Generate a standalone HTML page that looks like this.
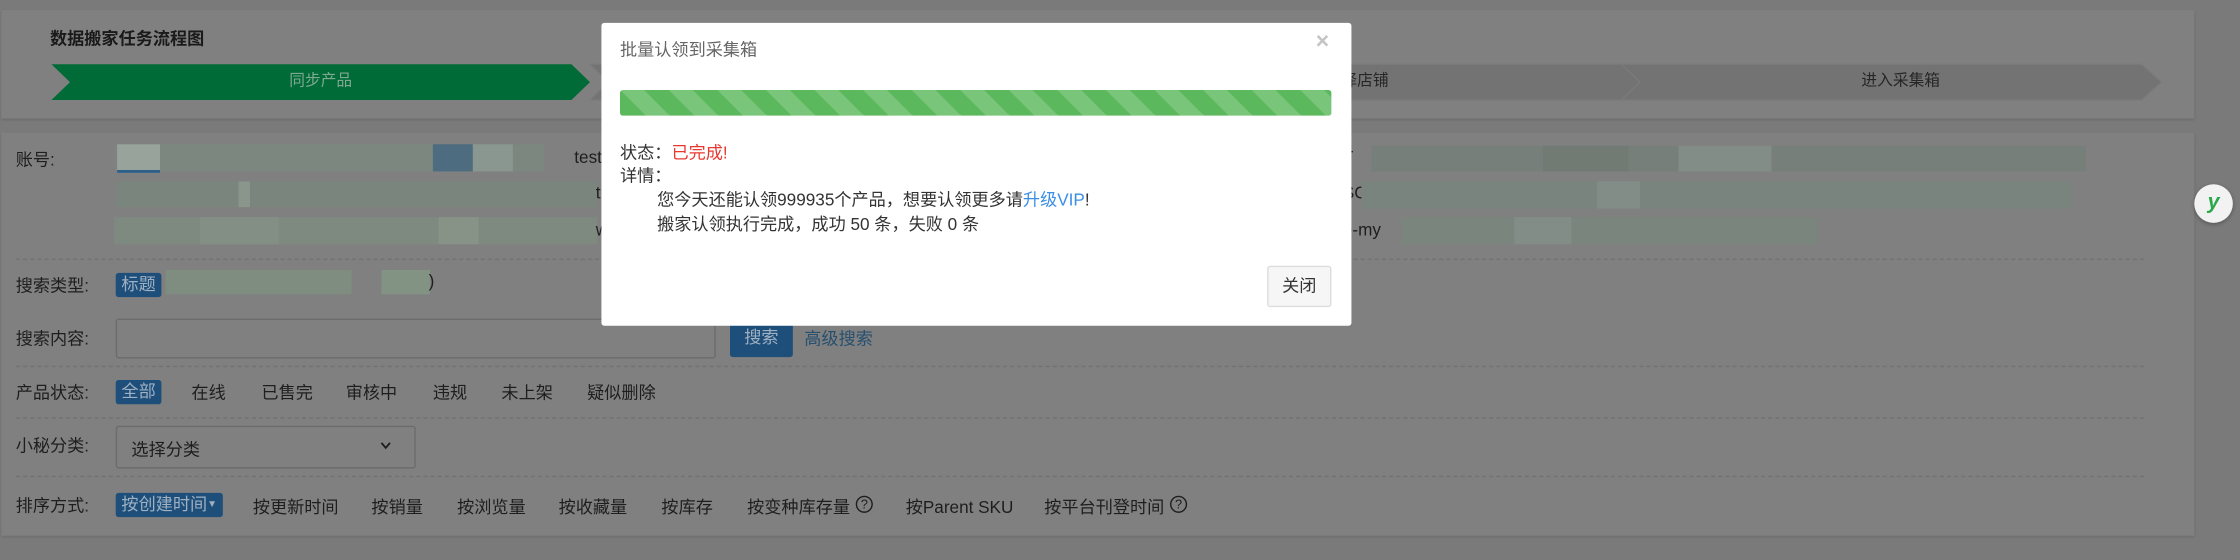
<!DOCTYPE html>
<html><head><meta charset="utf-8"><style>
html,body{margin:0;padding:0;width:2240px;height:560px;overflow:hidden;background:#7a7a7a}
#w{position:absolute;left:0;top:0;width:1568px;height:392px;transform:scale(1.428571);transform-origin:0 0;font-family:"Liberation Sans","Noto Sans CJK SC",sans-serif;font-size:12px;color:#1e1e1e}
.a{position:absolute;white-space:nowrap}
.panel{position:absolute;background:#808080;box-shadow:0 1px 2px rgba(0,0,0,.12)}
.dash{position:absolute;left:11px;width:1490px;border-top:1px dashed #727272;height:0}
.badge{position:absolute;background:#1e4f7a;color:#9fb0c2;height:17px;line-height:17px;padding:0 4px;border-radius:2px;white-space:nowrap}
.blk{position:absolute;background:#7d8880}
.step{position:absolute;top:45px;height:25px;line-height:25px;text-align:center;color:#262626}
</style></head><body><div id="w">
<div class="panel" style="left:1px;top:7px;width:1535px;height:76px"></div>
<div class="a" style="left:35px;top:18px;font-weight:bold;font-size:12px;color:#1a1a1a">数据搬家任务流程图</div>
<svg class="a" style="left:0;top:0" width="1568" height="100">
<polygon points="413,45 783,45 796,57.5 783,70 413,70 426,57.5" fill="#737373" stroke="#7a7a7a"/>
<polygon points="783,45 1135,45 1148,57.5 1135,70 783,70 796,57.5" fill="#737373" stroke="#7a7a7a"/>
<polygon points="1135,45 1499,45 1513,57.5 1499,70 1135,70 1148,57.5" fill="#737373" stroke="#7a7a7a"/>
<polygon points="36,45 400,45 413,57.5 400,70 36,70 49,57.5" fill="#006b36"/>
</svg>
<div class="step" style="left:36px;width:377px;color:#7fa98f;font-size:11px">同步产品</div>
<div class="step" style="left:900px;width:100px;color:#262626;font-size:11px">选择店铺</div>
<div class="step" style="left:1148px;width:365px;font-size:11px">进入采集箱</div>

<div class="panel" style="left:1px;top:93px;width:1535px;height:282px"></div>
<div class="a" style="left:11px;top:103px">账号:</div>
<div class="blk" style="left:81px;top:101px;width:300px;height:19px;background:#7c8780"></div>
<div class="blk" style="left:82px;top:101px;width:30px;height:18px;background:#98a39b;border-bottom:2px solid #2d5f8a"></div>
<div class="blk" style="left:303px;top:101px;width:28px;height:19px;background:#4d6c80"></div>
<div class="blk" style="left:331px;top:101px;width:28px;height:19px;background:#8a9791"></div>
<div class="a" style="left:402px;top:103px">test</div>
<div class="blk" style="left:81px;top:127px;width:337px;height:18px;background:#7a857e"></div>
<div class="blk" style="left:167px;top:127px;width:8px;height:18px;background:#8a958c"></div>
<div class="a" style="left:417px;top:128px">t</div>
<div class="blk" style="left:80px;top:152px;width:338px;height:19px;background:#7e8a80"></div>
<div class="blk" style="left:140px;top:152px;width:55px;height:19px;background:#838f84"></div>
<div class="blk" style="left:307px;top:152px;width:28px;height:19px;background:#879387"></div>
<div class="a" style="left:417px;top:154px">w</div>
<div class="a" style="left:940px;top:103px">T</div>
<div class="blk" style="left:960px;top:102px;width:500px;height:18px;background:#767f79"></div>
<div class="blk" style="left:1080px;top:102px;width:60px;height:18px;background:#727a74"></div>
<div class="blk" style="left:1175px;top:102px;width:65px;height:18px;background:#838d87"></div>
<div class="a" style="left:940px;top:128px">SC</div>
<div class="blk" style="left:953px;top:127px;width:497px;height:19px;background:#7a847e"></div>
<div class="blk" style="left:1118px;top:127px;width:30px;height:19px;background:#838d87"></div>
<div class="a" style="left:940px;top:154px">e-my</div>
<div class="blk" style="left:981px;top:152px;width:291px;height:19px;background:#7a857d"></div>
<div class="blk" style="left:1060px;top:152px;width:40px;height:19px;background:#838d87"></div>
<div class="dash" style="top:181px"></div>

<div class="a" style="left:11px;top:191px">搜索类型:</div>
<div class="badge" style="left:81px;top:191px">标题</div>
<div class="blk" style="left:116px;top:189px;width:130px;height:17px;background:#7f8d80"></div>
<div class="blk" style="left:267px;top:189px;width:34px;height:17px;background:#829283"></div>
<div class="a" style="left:300px;top:190px">)</div>

<div class="a" style="left:11px;top:228px">搜索内容:</div>
<div class="a" style="left:81px;top:223px;width:418px;height:26px;border:1px solid #6c6c6c;border-radius:2px;background:#808080"></div>
<div class="a" style="left:511px;top:223px;width:44px;height:27px;background:#1e4f7a;border-radius:2px;color:#9fb0c2;text-align:center;line-height:27px">搜索</div>
<div class="a" style="left:563px;top:228px;color:#27506f">高级搜索</div>
<div class="dash" style="top:256px"></div>

<div class="a" style="left:11px;top:266px">产品状态:</div>
<div class="badge" style="left:81px;top:266px">全部</div>
<div class="a" style="left:134px;top:266px">在线</div>
<div class="a" style="left:183px;top:266px">已售完</div>
<div class="a" style="left:242px;top:266px">审核中</div>
<div class="a" style="left:303px;top:266px">违规</div>
<div class="a" style="left:351px;top:266px">未上架</div>
<div class="a" style="left:411px;top:266px">疑似删除</div>
<div class="dash" style="top:292px"></div>

<div class="a" style="left:11px;top:303px">小秘分类:</div>
<div class="a" style="left:81px;top:298px;width:208px;height:28px;border:1px solid #6c6c6c;border-radius:2px"></div>
<div class="a" style="left:92px;top:306px">选择分类</div>
<svg class="a" style="left:266px;top:309px" width="8" height="6"><path d="M1 1 L4 4.5 L7 1" stroke="#1e1e1e" stroke-width="1.3" fill="none"/></svg>
<div class="dash" style="top:333px"></div>

<div class="a" style="left:11px;top:345px">排序方式:</div>
<div class="badge" style="left:81px;top:345px">按创建时间<span style="font-size:7px;vertical-align:2px">▼</span></div>
<div class="a" style="left:177px;top:346px">按更新时间</div>
<div class="a" style="left:260px;top:346px">按销量</div>
<div class="a" style="left:320px;top:346px">按浏览量</div>
<div class="a" style="left:391px;top:346px">按收藏量</div>
<div class="a" style="left:463px;top:346px">按库存</div>
<div class="a" style="left:523px;top:346px">按变种库存量</div>
<div class="a" style="left:599px;top:347px;width:10px;height:10px;border:1px solid #1e1e1e;border-radius:50%;font-size:9px;line-height:10px;text-align:center">?</div>
<div class="a" style="left:634px;top:346px">按Parent SKU</div>
<div class="a" style="left:731px;top:346px">按平台刊登时间</div>
<div class="a" style="left:819px;top:347px;width:10px;height:10px;border:1px solid #1e1e1e;border-radius:50%;font-size:9px;line-height:10px;text-align:center">?</div>

<div class="a" style="left:1536px;top:129px;width:27px;height:27px;border-radius:50%;background:#f2f2f2;box-shadow:0 1px 3px rgba(0,0,0,.3);text-align:center;line-height:26px;color:#2aa84a;font-weight:bold;font-style:italic;font-size:15px">y</div>

<div class="a" style="left:421px;top:16px;width:525px;height:212px;background:#fff;border-radius:2px"></div>
<div class="a" style="left:434px;top:26px;color:#666">批量认领到采集箱</div>
<div class="a" style="left:921px;top:21px;color:#c4c4c4;font-size:16px;font-weight:bold">×</div>
<div class="a" style="left:434px;top:63px;width:498px;height:18px;border-radius:2px;background-color:#5cb85c;background-image:linear-gradient(45deg,rgba(255,255,255,.18) 25%,transparent 25%,transparent 50%,rgba(255,255,255,.18) 50%,rgba(255,255,255,.18) 75%,transparent 75%,transparent);background-size:34px 34px"></div>
<div class="a" style="left:434px;top:98px;color:#333">状态：<span style="color:#e8382f">已完成!</span></div>
<div class="a" style="left:434px;top:114px;color:#333">详情：</div>
<div class="a" style="left:460px;top:131px;color:#333">您今天还能认领999935个产品，想要认领更多请<span style="color:#3a8ee6">升级VIP</span>!</div>
<div class="a" style="left:460px;top:148px;color:#333">搬家认领执行完成，成功 50 条，失败 0 条</div>
<div class="a" style="left:887px;top:186px;width:43px;height:27px;background:#f6f6f6;border:1px solid #ddd;border-radius:2px;text-align:center;line-height:27px;color:#333">关闭</div>
</div></body></html>
